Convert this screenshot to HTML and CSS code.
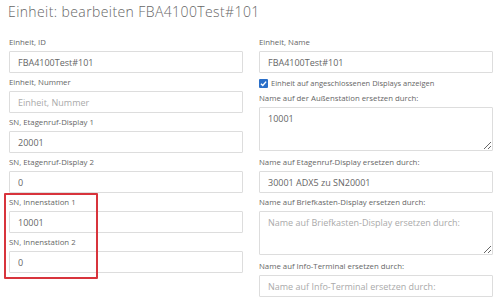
FILE: index.html
```html
<!DOCTYPE html>
<html lang="de">
<head>
<meta charset="utf-8">
<link rel="stylesheet" href="styles.css">
</head>
<body>
<div class="page">
  <h1 class="title">Einheit: bearbeiten FBA4100Test#101</h1>
  <div class="cols">
    <div class="col">
      <div class="field">
        <label class="lbl">Einheit, ID</label>
        <input class="inp" type="text" value="FBA4100Test#101">
      </div>
      <div class="field">
        <label class="lbl">Einheit, Nummer</label>
        <input class="inp" type="text" placeholder="Einheit, Nummer">
      </div>
      <div class="field">
        <label class="lbl">SN, Etagenruf-Display 1</label>
        <input class="inp" type="text" value="20001">
      </div>
      <div class="field">
        <label class="lbl">SN, Etagenruf-Display 2</label>
        <input class="inp" type="text" value="0">
      </div>
      <div class="highlight-wrap">
        <div class="field">
          <label class="lbl">SN, Innenstation 1</label>
          <input class="inp" type="text" value="10001">
        </div>
        <div class="field">
          <label class="lbl">SN, Innenstation 2</label>
          <input class="inp" type="text" value="0">
        </div>
        <div class="highlight"></div>
      </div>
    </div>
    <div class="col">
      <div class="field">
        <label class="lbl">Einheit, Name</label>
        <input class="inp" type="text" value="FBA4100Test#101">
      </div>
      <div class="check-row">
        <span class="cb"><svg viewBox="0 0 10 10" width="9" height="9"><path d="M2.2 5.2 L4.2 7.2 L7.9 2.9" fill="none" stroke="#fff" stroke-width="1.6"/></svg></span>
        <span class="cb-label">Einheit auf angeschlossenen Displays anzeigen</span>
      </div>
      <div class="field">
        <label class="lbl">Name auf der Außenstation ersetzen durch:</label>
        <textarea class="ta">10001</textarea>
      </div>
      <div class="field">
        <label class="lbl">Name auf Etagenruf-Display ersetzen durch:</label>
        <input class="inp" type="text" value="30001 ADX5 zu SN20001">
      </div>
      <div class="field">
        <label class="lbl">Name auf Briefkasten-Display ersetzen durch:</label>
        <textarea class="ta" placeholder="Name auf Briefkasten-Display ersetzen durch:"></textarea>
      </div>
      <div class="field">
        <label class="lbl">Name auf Info-Terminal ersetzen durch:</label>
        <input class="inp" type="text" placeholder="Name auf Info-Terminal ersetzen durch:">
      </div>
    </div>
  </div>
</div>
</body>
</html>
```
FILE: styles.css
```css
* { box-sizing: border-box; }
html, body { margin: 0; padding: 0; background: #fff; }
body { font-family: "Open Sans", "DejaVu Sans", sans-serif; color: #555; overflow: hidden; }
.page { padding: 2px 7px 0 9px; }
.title {
  margin: 0 0 0 -1px;
  font-size: 14px;
  letter-spacing: 0.4px;
  font-weight: 300;
  color: #666;
  line-height: 20px;
  height: 34px;
}
.cols { display: grid; grid-template-columns: 234px 234px; column-gap: 16px; }
.col { display: flex; flex-direction: column; }
.field { display: flex; flex-direction: column; }
.lbl { font-size: 7.8px; line-height: 13px; height: 13px; color: #666; margin-bottom: 2px; }
.inp {
  font-family: inherit;
  font-size: 9px;
  color: #666;
  height: 22px;
  border: 1px solid #ddd;
  border-radius: 1px;
  padding: 0 8px;
  margin: 0 0 3px 0;
  outline: none;
  background: #fff;
}
.inp::placeholder { color: #aaa; }
.ta {
  font-family: inherit;
  font-size: 9px;
  color: #666;
  height: 44px;
  border: 1px solid #ddd;
  border-radius: 1px;
  padding: 4px 8px;
  margin: 0 0 5px 0;
  outline: none;
  resize: vertical;
}
.ta::placeholder { color: #aaa; }
.check-row { display: flex; align-items: flex-start; gap: 3px; height: 16px; padding-top: 3px; }
.cb {
  width: 9px; height: 9px; background: #2a6fc9; border-radius: 1px;
  display: flex; align-items: center; justify-content: center;
}
.cb svg { display: block; }
.cb-label { font-size: 7.5px; line-height: 9px; color: #666; }
.highlight-wrap { position: relative; }
.highlight {
  position: absolute;
  left: -5px; top: -3px;
  width: 94px; height: 86px;
  border: 2px solid #d8343c;
  border-radius: 1px;
  pointer-events: none;
}
```
